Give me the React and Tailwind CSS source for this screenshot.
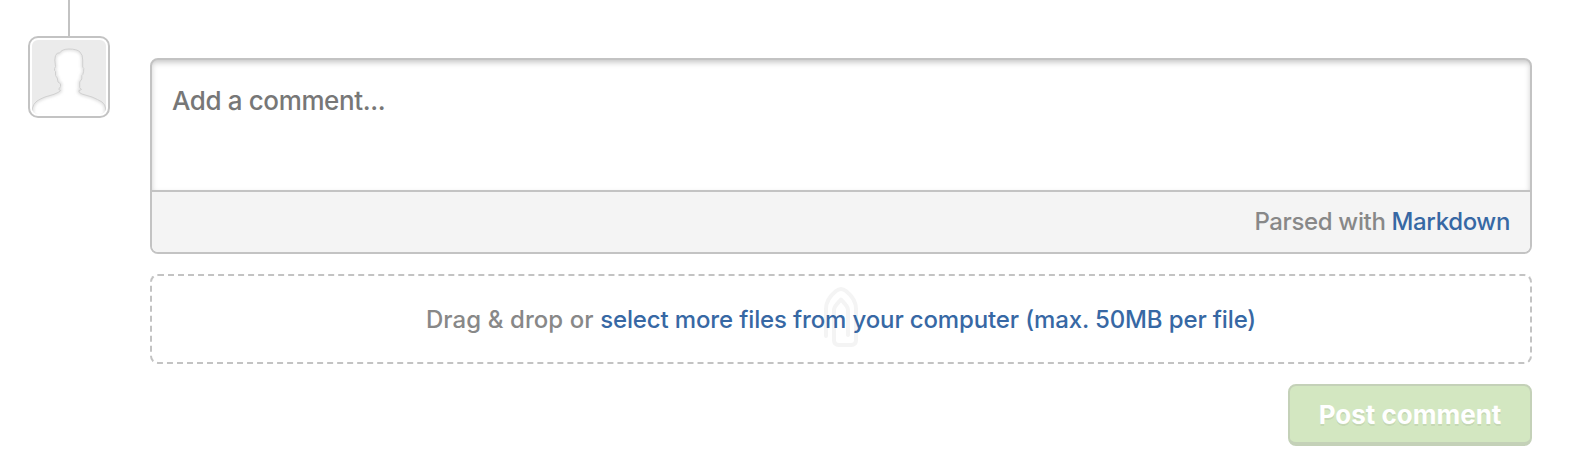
const BUST =
  "M0.5 78V68Q1 64 5 61Q9 58.500 13 57L22 54.300Q27 52.500 28.500 50.500L26.700 49.300L28.500 46.500V43.800L26 42L25.200 38L23.500 35.500V31.500L22.500 30.500V28.500L23.500 26.500Q22 19 23.500 15.500L25.500 13H27.500Q30 9 37 9Q45 9 48 12Q51 15 50.700 20V27L51.800 28.500Q51.800 32 50.800 34.500L49.800 35.500V39L47.700 42V47.500L49.500 49.500L46.800 50.800Q47 53 50 54L60 57Q66 59.500 70 62Q73.500 65 73.500 68V78Z";

function Avatar() {
  return (
    <div className="flex w-[82px] shrink-0 flex-col items-center">
      <div className="h-9 w-0.5 bg-[#c3c3c3]" />
      <div className="size-[82px] rounded-[10px] border-2 border-[#c3c3c3] bg-white p-0.5">
        <svg viewBox="0 0 74 74" className="block size-[74px]" aria-hidden="true">
          <defs>
            <filter id="soft" x="-20%" y="-20%" width="140%" height="140%">
              <feGaussianBlur stdDeviation="1.6" />
            </filter>
            <clipPath id="frame">
              <rect width="74" height="74" rx="6" />
            </clipPath>
            <clipPath id="person">
              <path d={BUST} />
            </clipPath>
          </defs>
          <g clipPath="url(#frame)">
            <rect width="74" height="74" fill="#ebebeb" />
            <path d={BUST} fill="#fff" />
            <g clipPath="url(#person)">
              <path d={BUST} fill="none" stroke="#dddddd" strokeWidth="3" filter="url(#soft)" />
            </g>
            <path d={BUST} fill="none" stroke="#d0d0d0" strokeWidth="1" />
          </g>
        </svg>
      </div>
    </div>
  );
}

function PaperclipMark() {
  return (
    <svg
      viewBox="0 0 40 64"
      className="pointer-events-none absolute top-[9px] left-[669px] h-16 w-10"
      fill="none"
      stroke="#f4f4f4"
      strokeWidth="4"
      strokeLinecap="round"
      strokeLinejoin="round"
      aria-hidden="true"
    >
      <path d="M5 51V24C5 15 10 10 15 6Q20 2 25 6C30 10 35 15 35 24V55Q35 60 30 60H18Q13 60 13 55V25C13 21 17 18 20 14.500C23 18 27 21 27 25V50" />
    </svg>
  );
}

export default function App() {
  return (
    <main className="flex h-[468px] w-[1572px] gap-10 overflow-hidden bg-white pl-7 font-[Inter,sans-serif]">
      <Avatar />
      <form className="flex w-[1382px] flex-col pt-[58px]">
        <section className="h-[196px] overflow-hidden rounded-lg border-2 border-[#c3c3c3]">
          <div className="h-[130px] overflow-hidden px-5 pt-[21px] text-[26px] leading-10 font-[450] tracking-[-0.38px] text-[#777] shadow-[inset_0_3px_6px_-1px_rgba(0,0,0,0.25)]">
            <span>Add a comment...</span>
          </div>
          <div className="flex h-[62px] items-center justify-end border-t-2 border-[#c3c3c3] bg-[#f4f4f4] pr-5 text-[24px] font-[450] tracking-[-0.36px]">
            <p className="whitespace-pre text-[#888]">
              <span>Parsed with </span>
              <a className="text-[#3768a4]">Markdown</a>
            </p>
          </div>
        </section>
        <section className="relative mt-5 flex h-[90px] items-center justify-center rounded-lg border-2 border-dashed border-[#c3c3c3] pt-0.5 text-[24px] font-[450]">
          <PaperclipMark />
          <p className="relative whitespace-pre text-[#888]">
            <span className="tracking-[0.08px]">Drag &amp; drop or </span>
            <a className="tracking-[-0.14px] text-[#3768a4]">select more files from your computer (max. 50MB per file)</a>
          </p>
        </section>
        <button
          type="button"
          className="mt-5 h-[62px] w-[244px] self-end rounded-lg border-2 border-b-4 border-[#c4d1b8] bg-[#d3e7c1] text-[26px] font-bold text-white [text-shadow:0_2px_0_rgba(0,0,0,0.08)]"
        >
          Post comment
        </button>
      </form>
    </main>
  );
}
